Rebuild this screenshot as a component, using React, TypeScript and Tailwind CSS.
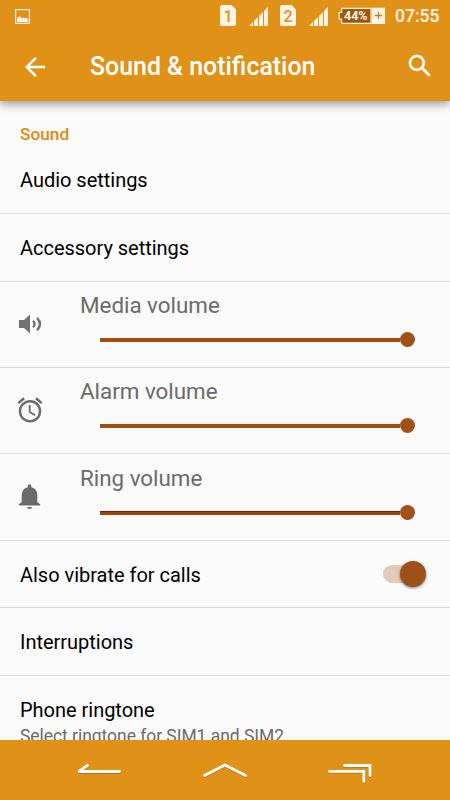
import React from "react";

function SimIcon({ label }: { label: string }) {
  return (
    <div className="relative h-[21px] w-4">
      <svg className="absolute inset-0" width="16" height="21" viewBox="0 0 16 21" fill="#fdf3e4">
        <path d="M2 0H11.5L16 4.5V19Q16 21 14 21H2Q0 21 0 19V2Q0 0 2 0Z" />
      </svg>
      <span className="absolute inset-x-0 top-px text-center text-[16px] font-medium leading-[21px] text-[#e09117]">{label}</span>
    </div>
  );
}

function SignalIcon() {
  return (
    <svg width="20" height="20" viewBox="0 0 20 20" fill="#fdf3e4">
      <path d="M0 19L4 15V19ZM5 14L9 10V19H5ZM10 9L14 5V19H10ZM15 4L19 0V19H15Z" />
    </svg>
  );
}

function StatusBar() {
  return (
    <div className="relative flex h-8 items-center">
      <svg className="ml-[15px]" width="15" height="15" viewBox="0 0 15 15" fill="none">
        <rect x="0.6" y="0.6" width="13.8" height="13.8" stroke="#fdf3e4" strokeWidth="1.2" />
        <path d="M2 13V9.5L4.5 7L7 9.3L8.5 8.4L9.5 9.4L11 8.6L13 10.5V13Z" fill="#fdf3e4" />
      </svg>
      <div className="-mt-px ml-[190px] flex items-center">
        <SimIcon label="1" />
        <div className="ml-[13px] mt-[2px]"><SignalIcon /></div>
        <div className="ml-[11px]"><SimIcon label="2" /></div>
        <div className="ml-[13px] mt-[2px]"><SignalIcon /></div>
      </div>
      <div className="relative -mt-px ml-[9px] h-[18px] w-[48px]">
        <svg className="absolute inset-0" width="48" height="18" viewBox="0 0 48 18" fill="none">
          <path d="M4.6 1.3H33V16.4H4.6Q3.6 16.4 3.6 15.4V12H1.2V5.5H3.6V2.3Q3.6 1.3 4.6 1.3Z" fill="#9b5a0c" stroke="#fdf3e4" strokeWidth="1.2" />
          <path d="M34 0.7H47V17H34Z" fill="#fdf3e4" />
          <path d="M40.5 5V12M37 8.5H44" stroke="#cc8018" strokeWidth="1.3" />
        </svg>
        <span className="absolute left-[6px] top-0 text-[12.5px] font-bold leading-[18px] text-[#fdf3e4]">44%</span>
      </div>
      <span className="ml-[9px] text-[17.5px] font-medium leading-8 text-[#fdf3e4]">07:55</span>
    </div>
  );
}

function Toolbar() {
  return (
    <div className="flex h-[69px] items-center">
      <svg className="ml-5" width="30" height="30" viewBox="0 0 24 24" fill="#fff">
        <path d="M20 11H7.83l5.59-5.59L12 4l-8 8 8 8 1.41-1.41L7.83 13H20v-2z" />
      </svg>
      <h1 className="ml-10 mt-px text-[24.9px] font-medium leading-[30px]">Sound &amp; notification</h1>
      <svg className="-mt-px ml-auto mr-[15px]" width="30" height="30" viewBox="0 0 24 24" fill="#fff">
        <path d="M15.5 14h-.79l-.28-.27A6.471 6.471 0 0 0 16 9.5 6.5 6.5 0 1 0 9.5 16c1.61 0 3.09-.59 4.23-1.57l.27.28v.79l5 4.99L20.49 19l-4.99-5zm-6 0C7.01 14 5 11.99 5 9.5S7.01 5 9.5 5 14 7.01 14 9.5 11.99 14 9.5 14z" stroke="#fff" strokeWidth="0.15" />
      </svg>
    </div>
  );
}

function SpeakerIcon() {
  return (
    <svg width="30" height="30" viewBox="0 0 30 30" fill="none">
      <path d="M4 11H9L15 5.5V24.5L9 19H4Z" fill="#727272" />
      <path d="M18 11.8Q21.2 15 18 18.2M22 8.8Q28 15 22 21.2" stroke="#727272" strokeWidth="2.4" />
    </svg>
  );
}

function AlarmIcon() {
  return (
    <svg width="30" height="30" viewBox="0 0 24 24" fill="#6b6b6b">
      <path d="M22 5.72l-4.6-3.86-1.29 1.53 4.6 3.86L22 5.72zM7.88 3.39L6.6 1.86 2 5.71l1.29 1.53 4.59-3.85zM12.5 8H11v6l4.75 2.85.75-1.23-4-2.37V8zM12 4c-4.97 0-9 4.03-9 9s4.02 9 9 9a9 9 0 0 0 0-18zm0 16c-3.87 0-7-3.13-7-7s3.13-7 7-7 7 3.13 7 7-3.13 7-7 7z" />
    </svg>
  );
}

function BellIcon() {
  return (
    <svg width="30" height="30" viewBox="0 0 30 30" fill="#6b6b6b">
      <path d="M12.7 6.2V5Q12.7 3.2 14.5 3.2T16.3 5V6.2Q22.3 7.8 22.3 14V21L25.2 23.3V24.5H3.8V23.3L6.7 21V14Q6.7 7.8 12.7 6.2ZM12 26H17Q16.7 28 14.5 28T12 26Z" />
    </svg>
  );
}

function VolumeRow({ label, icon, height, track, spacing }: { label: string; icon: React.ReactNode; height: string; track: string; spacing: string }) {
  return (
    <div className={"flex border-b border-[#dbdbdb] " + height}>
      <div className="w-20 pl-[15px] pt-[27px]">{icon}</div>
      <div className={"flex w-[335px] flex-col " + spacing}>
        <div className="text-[22.4px] leading-[30px] text-[#6b6b6b]">{label}</div>
        <div className="ml-5 flex h-[15px] items-center">
          <div className={"h-1 w-[300px] " + track} />
          <div className="size-[15px] rounded-full bg-[#a05219]" />
        </div>
      </div>
    </div>
  );
}

function NavigationBar() {
  return (
    <div className="h-[60px] shrink-0 bg-[#e09117]">
      <svg width="450" height="60" viewBox="0 0 450 60" fill="none" stroke="#fff" strokeWidth="2.8" strokeLinecap="round" strokeLinejoin="round">
        <g stroke="#b47412" transform="translate(0 0.8)">
          <path d="M119.5 31.7H79L87.5 25.5" />
          <path d="M204.5 35.5L225 25L245.5 35.5" />
          <path d="M329.5 31.3H363.8V41.3M344.5 25.5H370V35.5" strokeLinejoin="miter" />
        </g>
        <path d="M119.5 31.5H79L87.5 25.3" />
        <path d="M204.5 35.5L225 25L245.5 35.5" />
        <path d="M329.5 31.3H363.8V41.3M344.5 25.5H370V35.5" strokeLinejoin="miter" />
      </svg>
    </div>
  );
}

export default function App() {
  return (
    <div className="flex h-[800px] w-[450px] flex-col overflow-hidden bg-[#fafafa] font-['Roboto',sans-serif] text-black">
      <header className="z-10 h-[101px] shrink-0 bg-[#e09117] text-white shadow-[0_3px_9px_rgba(0,0,0,0.4)]">
        <StatusBar />
        <Toolbar />
      </header>
      <main className="min-h-0 flex-1 overflow-hidden text-[20px] tracking-[-0.02px]">
        <h2 className="h-[46px] pl-5 pt-[21px] text-[17.3px] font-medium leading-6 text-[#e08a10]">Sound</h2>
        <div className="flex h-[67px] items-center border-b border-[#dbdbdb] pl-5">Audio settings</div>
        <div className="flex h-[68px] items-center border-b border-[#dbdbdb] pl-5">Accessory settings</div>
        <VolumeRow label="Media volume" icon={<SpeakerIcon />} height="h-[86px]" track="bg-[#a14d0d]" spacing="gap-3 pt-2" />
        <VolumeRow label="Alarm volume" icon={<AlarmIcon />} height="h-[86px]" track="bg-[#a14d0d]" spacing="gap-3 pt-2" />
        <VolumeRow label="Ring volume" icon={<BellIcon />} height="h-[87px]" track="border-t border-[#970b05] bg-[#a0450f]" spacing="gap-3 pt-[9px]" />
        <div className="flex h-[67px] items-center border-b border-[#dbdbdb] pl-5">
          <span className="pt-px">Also vibrate for calls</span>
          <div className="relative ml-auto mr-6 h-[26px] w-[43px]">
            <div className="absolute left-0 top-1 h-[18px] w-[36px] rounded-full bg-[#e0cab9]" />
            <div className="absolute right-0 top-0 size-[26px] rounded-full bg-[#9d5118] shadow-[0_1px_3px_rgba(0,0,0,0.5)]" />
          </div>
        </div>
        <div className="flex h-[68px] items-center border-b border-[#dbdbdb] pl-5 pt-px">Interruptions</div>
        <div className="pl-5 pt-[19px]">
          <div className="leading-[30px]">Phone ringtone</div>
          <div className="text-[17.45px] leading-[22px] text-[#6b6b6b]">Select ringtone for SIM1 and SIM2</div>
        </div>
      </main>
      <NavigationBar />
    </div>
  );
}
